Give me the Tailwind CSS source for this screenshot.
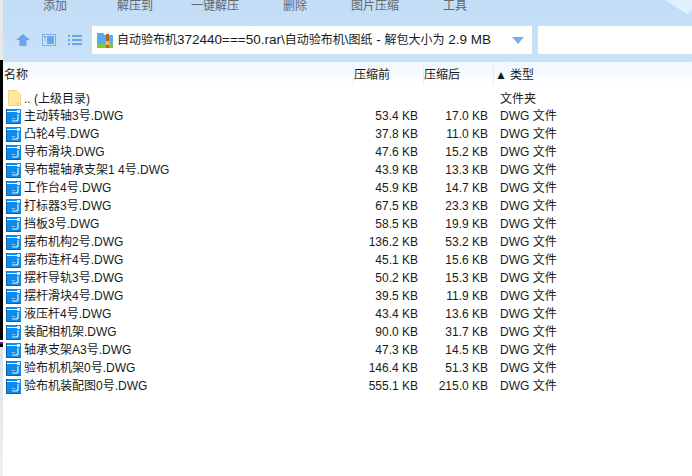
<!DOCTYPE html>
<html lang="zh">
  <head>
    <meta charset="UTF-8" />
    <title>文件列表</title>
    <script src="https://cdn.jsdelivr.net/npm/@tailwindcss/browser@4"></script>
  </head>
  <body class="w-[692px] h-[476px] overflow-hidden bg-white text-[12px] text-[#1a1a1a] font-['Liberation_Sans','Noto_Sans_CJK_SC',sans-serif]">
    <div class="flex h-full">
      <!-- window edge behind this one -->
      <div class="w-[3px] shrink-0 flex flex-col">
        <div class="h-[60px] bg-[#e6e8ea]"></div>
        <div class="h-[280px] bg-black"></div>
        <div class="h-[2px] bg-white"></div>
        <div class="h-[2px] bg-[#6a1b7a]"></div>
        <div class="h-[3px] bg-black"></div>
        <div class="flex-1 bg-gradient-to-b from-[#dfe2e6] to-[#eef0f2]"></div>
      </div>
      <div class="flex-1 flex flex-col min-w-0">
        <!-- toolbar -->
        <div class="h-[62px] bg-gradient-to-b from-[#c3ddf7] to-[#c9e1f8] relative">
          <div class="flex h-[12px] items-end overflow-hidden text-[#666] leading-none">
            <span class="ml-[40px] w-[74px]">添加</span>
            <span class="w-[74px]">解压到</span>
            <span class="w-[92px]">一键解压</span>
            <span class="w-[68px]">删除</span>
            <span class="w-[92px]">图片压缩</span>
            <span>工具</span>
          </div>
          <svg class="absolute top-0 right-0 w-[27px] h-[15px]" viewBox="0 0 27 15"><path d="M0 0H27V9L22 14Z" fill="#e2f1fe" /><path d="M22 14 27 9V11L23 15Z" fill="#d4e8fb" /></svg>
          <div class="flex items-center mt-[14px] h-[28px]">
            <svg class="ml-[13px] w-[14px] h-[12px]" viewBox="0 0 14 12"><path d="M7 0 14 6H10.500V12H3.500V6H0Z" fill="#6aa5ea" /></svg>
            <svg class="ml-[12px] w-[14px] h-[12px]" viewBox="0 0 14 12"><rect x=".5" y=".5" width="13" height="11" fill="none" stroke="#7aaeea" /><rect x="5" y="2" width="7" height="8" fill="#6aa5ea" /><rect x="2" y="2" width="2" height="2" fill="#6aa5ea" /><rect x="2" y="5" width="2" height="2" fill="#a5c8f0" /></svg>
            <svg class="ml-[12px] w-[14px] h-[10px]" viewBox="0 0 14 10"><path d="M0 0h2v2H0zM4 0h10v2H4zM0 4h2v2H0zM4 4h10v2H4zM0 8h2v2H0zM4 8h10v2H4z" fill="#6aa5ea" /></svg>
            <div class="ml-[10px] w-[440px] h-[28px] bg-white flex items-center pl-[5px]">
              <svg class="w-[16px] h-[15px] shrink-0" viewBox="0 0 16 15"><path d="M0 0h6l2 2h8v10H0z" fill="#55adef" /><rect y="11" width="16" height="4" fill="#83c441" /><rect x="9" y="1" width="3" height="14" fill="#b8661c" /><rect x="8.500" y="8" width="4" height="4" fill="#f5c04a" /></svg>
              <span class="ml-[4px] whitespace-nowrap">自动验布机<span class="text-[13.500px]">372440===50.rar\</span>自动验布机<span class="text-[13.500px]">\</span>图纸<span class="text-[13.500px]"> - </span>解包大小为<span class="text-[13.500px]"> 2.9 MB</span></span>
              <svg class="ml-auto mr-[8px] w-[12px] h-[7px]" viewBox="0 0 12 7"><path d="M0 0h12L6 7z" fill="#7aaeea" /></svg>
            </div>
            <div class="ml-[6px] flex-1 h-[28px] bg-white"></div>
          </div>
        </div>

        <!-- column header -->
        <div class="h-[24px] pt-[2px] flex items-center bg-gradient-to-b from-[#f0f7fe] to-white">
          <span class="w-[350px] pl-[1px]">名称</span>
          <span class="w-[70px] border-l border-[#e3eef9] h-full flex items-center">压缩前</span>
          <span class="w-[70px] border-l border-[#e3eef9] h-full flex items-center">压缩后</span>
          <span class="border-l border-[#e3eef9] h-full flex items-center pl-[1px]"><span class="text-[12px] mr-[3px]">▲</span>类型</span>
        </div>

        <!-- file rows -->
        <ul id="files" class="pt-[3px]">
          <li class="flex h-[18px] items-center">
            <svg class="ml-[5px] w-[13px] h-[16px] shrink-0" viewBox="0 0 13 16"><path d="M.5.500h8l4 4v11H.5z" fill="#ffe79c" stroke="#efd588" /><path d="M9 16v-3h4" fill="#f3cf6c" /></svg>
            <span class="ml-[3px] w-[328px] mt-[2px]">.. (上级目录)</span>
            <span class="w-[66px]"></span><span class="w-[70px]"></span>
            <span class="ml-[12px] mt-[2px]">文件夹</span>
          </li>
        </ul>
      </div>
    </div>
    <script>
      // rows come from the archive listing
      const rows = [
        ["主动转轴3号.DWG", "53.4 KB", "17.0 KB"],
        ["凸轮4号.DWG", "37.8 KB", "11.0 KB"],
        ["导布滑块.DWG", "47.6 KB", "15.2 KB"],
        ["导布辊轴承支架1 4号.DWG", "43.9 KB", "13.3 KB"],
        ["工作台4号.DWG", "45.9 KB", "14.7 KB"],
        ["打标器3号.DWG", "67.5 KB", "23.3 KB"],
        ["挡板3号.DWG", "58.5 KB", "19.9 KB"],
        ["摆布机构2号.DWG", "136.2 KB", "53.2 KB"],
        ["摆布连杆4号.DWG", "45.1 KB", "15.6 KB"],
        ["摆杆导轨3号.DWG", "50.2 KB", "15.3 KB"],
        ["摆杆滑块4号.DWG", "39.5 KB", "11.9 KB"],
        ["液压杆4号.DWG", "43.4 KB", "13.6 KB"],
        ["装配相机架.DWG", "90.0 KB", "31.7 KB"],
        ["轴承支架A3号.DWG", "47.3 KB", "14.5 KB"],
        ["验布机机架0号.DWG", "146.4 KB", "51.3 KB"],
        ["验布机装配图0号.DWG", "555.1 KB", "215.0 KB"],
      ];
      const list = document.getElementById("files");
      for (const [name, size, packed] of rows) {
        const li = document.createElement("li");
        li.className = "flex h-[18px] items-center";
        li.innerHTML = `
          <svg class="ml-[3px] w-[15px] h-[15px] shrink-0" viewBox="0 0 15 15"><rect width="15" height="15" fill="#0d8aea"/><path d="M0 0v15h15v-1H1V0z" fill="#0a62b0"/><path d="M1 2.500h10" stroke="#fff"/><rect x="11" y="1" width="3" height="3" fill="#d8ecfc"/><path d="M12 5v5q0 2-2 2H6" fill="none" stroke="#e8f4fe" stroke-width="1.200"/><path d="M6 9.500h3" stroke="#8cc6f4"/></svg>
          <span class="ml-[3px] w-[328px] whitespace-nowrap">${name}</span>
          <span class="w-[66px] text-right">${size}</span>
          <span class="w-[70px] text-right">${packed}</span>
          <span class="ml-[12px]">DWG 文件</span>`;
        list.appendChild(li);
      }
    </script>
  </body>
</html>
